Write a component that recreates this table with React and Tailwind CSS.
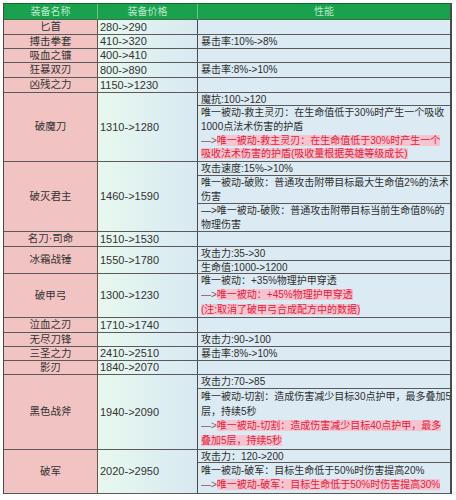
import React from "react";

const R = (text, arrow = true) => ({ red: true, arrow, text });

const rows = [
  { name: "匕首", price: "280->290", h: 15, perf: [] },
  { name: "搏击拳套", price: "410->320", h: 14, perf: [{ h: 14, lines: ["暴击率:10%->8%"] }] },
  { name: "吸血之镰", price: "400->410", h: 14, perf: [] },
  { name: "狂暴双刃", price: "800->890", h: 15, perf: [{ h: 15, lines: ["暴击率:8%->10%"] }] },
  { name: "凶残之力", price: "1150->1230", h: 15, perf: [] },
  {
    name: "破魔刀",
    price: "1310->1280",
    h: 69,
    perf: [
      { h: 13, lines: ["魔抗:100->120"] },
      {
        h: 56,
        lines: [
          "唯一被动-救主灵刃：在生命值低于30%时产生一个吸收",
          "1000点法术伤害的护盾",
          R("唯一被动-救主灵刃：在生命值低于30%时产生一个"),
          R("吸收法术伤害的护盾(吸收量根据英雄等级成长)", false),
        ],
      },
    ],
  },
  {
    name: "破灭君主",
    price: "1460->1590",
    h: 70,
    perf: [
      { h: 14, lines: ["攻击速度:15%->10%"] },
      { h: 28, lines: ["唯一被动-破败：普通攻击附带目标最大生命值2%的法术", "伤害"] },
      { h: 28, lines: ["—>唯一被动-破败：普通攻击附带目标当前生命值8%的", "物理伤害"] },
    ],
  },
  { name: "名刀·司命", price: "1510->1530", h: 15, perf: [] },
  {
    name: "冰霜战锤",
    price: "1550->1780",
    h: 27,
    perf: [
      { h: 14, lines: ["攻击力:35->30"] },
      { h: 13, lines: ["生命值:1000->1200"] },
    ],
  },
  {
    name: "破甲弓",
    price: "1300->1230",
    h: 44,
    perf: [
      {
        h: 44,
        lines: ["唯一被动：+35%物理护甲穿透", R("唯一被动：+45%物理护甲穿透"), R("(注:取消了破甲弓合成配方中的数据)", false)],
      },
    ],
  },
  { name: "泣血之刃", price: "1710->1740", h: 15, perf: [] },
  { name: "无尽刀锋", price: "", h: 14, perf: [{ h: 14, lines: ["攻击力:90->100"] }] },
  { name: "三圣之力", price: "2410->2510", h: 14, perf: [{ h: 14, lines: ["暴击率:8%->10%"] }] },
  { name: "影刃", price: "1840->2070", h: 14, perf: [] },
  {
    name: "黑色战斧",
    price: "1940->2090",
    h: 75,
    perf: [
      { h: 14, lines: ["攻击力:70->85"] },
      {
        h: 61,
        lines: [
          "唯一被动-切割：造成伤害减少目标30点护甲，最多叠加5",
          "层，持续5秒",
          R("唯一被动-切割：造成伤害减少目标40点护甲，最多"),
          R("叠加5层，持续5秒", false),
        ],
      },
    ],
  },
  {
    name: "破军",
    price: "2020->2950",
    h: 44,
    perf: [
      { h: 13, lines: ["攻击力：120->200"] },
      { h: 31, lines: ["唯一被动-破军：目标生命低于50%时伤害提高20%", R("唯一被动-破军：目标生命低于50%时伤害提高30%")] },
    ],
  },
];

function Line({ l }) {
  if (typeof l === "string") {
    return <div className="whitespace-nowrap overflow-hidden leading-[14.5px]">{l}</div>;
  }
  return (
    <div className="whitespace-nowrap overflow-hidden leading-[14.5px]">
      {l.arrow && <span className="text-[#8a5560]">—&gt;</span>}
      <span className="text-[#e5213f] bg-[#f5c4ce]">{l.text}</span>
    </div>
  );
}

export default function App() {
  const font = { fontFamily: '"Liberation Sans", "Noto Sans CJK SC", sans-serif' };
  return (
    <div className="w-[456px] h-[500px] bg-white pt-[3px] pl-[3px]" style={font}>
      <div className="w-[449px] border-t border-l border-r-2 border-[#4a4a4a] border-t-[#0f6a32] text-[#2a2a2a]">
        <div className="flex h-[16px] bg-[#1aa14d] border-b border-[#3f6b4c] text-[#b9e9c9] text-[10px]">
          <div className="w-[94px] border-r border-[#6cc48c] flex items-center justify-center">装备名称</div>
          <div className="w-[100px] border-r border-[#6cc48c] flex items-center justify-center">装备价格</div>
          <div className="flex-1 flex items-center justify-center">性能</div>
        </div>
        {rows.map((r, i) => (
          <div key={i} className="flex border-b border-[#5a5a5a]" style={{ height: r.h }}>
            <div className="w-[94px] shrink-0 bg-[#f1c4c3] border-r border-[#6b5050] flex items-center justify-center text-[10.5px] text-[#333]">
              {r.name}
            </div>
            <div className="w-[100px] shrink-0 bg-linear-to-r from-[#e8f8ef] to-[#d8e9f2] border-r border-[#4a4a4a] flex items-center pl-[2px] text-[11px] text-[#333]">
              {r.price}
            </div>
            <div className="flex-1 min-w-0 bg-[#dbeaf3] flex flex-col text-[10px] text-[#2e2e2e]">
              {r.perf.map((c, j) => (
                <div
                  key={j}
                  className={
                    "flex flex-col justify-center pl-[3px] overflow-hidden " +
                    (j < r.perf.length - 1 ? "border-b border-[#5a5a5a]" : "")
                  }
                  style={{ height: j < r.perf.length - 1 ? c.h : undefined, flex: j < r.perf.length - 1 ? "none" : 1 }}
                >
                  {c.lines.map((l, k) => (
                    <Line key={k} l={l} />
                  ))}
                </div>
              ))}
            </div>
          </div>
        ))}
      </div>
    </div>
  );
}
